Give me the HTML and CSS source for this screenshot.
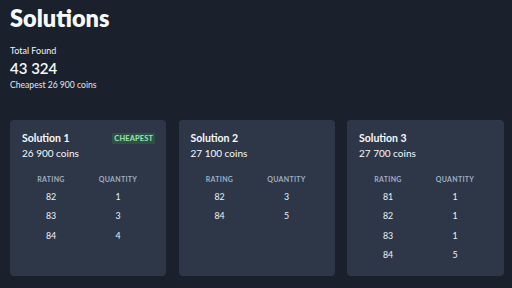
FILE: index.html
```html
<!DOCTYPE html>
<html>
<head>
<meta charset="utf-8">
<link rel="stylesheet" href="styles.css">
</head>
<body>
<div class="page">
  <h1 class="title">Solutions</h1>
  <div class="summary">
    <div class="label">Total Found</div>
    <div class="total">43 324</div>
    <div class="cheapest">Cheapest 26 900 coins</div>
  </div>
  <div class="cards">
    <div class="card">
      <div class="card-head">
        <div class="name">Solution 1</div>
        <span class="badge">CHEAPEST</span>
      </div>
      <div class="price">26 900 coins</div>
      <div class="table">
        <div class="th">RATING</div><div class="th">QUANTITY</div>
        <div class="td">82</div><div class="td">1</div>
        <div class="td">83</div><div class="td">3</div>
        <div class="td">84</div><div class="td">4</div>
      </div>
    </div>
    <div class="card">
      <div class="card-head">
        <div class="name">Solution 2</div>
      </div>
      <div class="price">27 100 coins</div>
      <div class="table">
        <div class="th">RATING</div><div class="th">QUANTITY</div>
        <div class="td">82</div><div class="td">3</div>
        <div class="td">84</div><div class="td">5</div>
      </div>
    </div>
    <div class="card">
      <div class="card-head">
        <div class="name">Solution 3</div>
      </div>
      <div class="price">27 700 coins</div>
      <div class="table">
        <div class="th">RATING</div><div class="th">QUANTITY</div>
        <div class="td">81</div><div class="td">1</div>
        <div class="td">82</div><div class="td">1</div>
        <div class="td">83</div><div class="td">1</div>
        <div class="td">84</div><div class="td">5</div>
      </div>
    </div>
  </div>
</div>
</body>
</html>
```
FILE: styles.css
```css
* { box-sizing: border-box; }
html, body { margin: 0; padding: 0; }
body {
  background: #1a202c;
  color: #f7fafc;
  font-family: "Lato", "Noto Sans", sans-serif;
  width: 512px;
  height: 288px;
  overflow: hidden;
}
.page {
  padding: 3px 0 0 10px;
}
.title {
  margin: 0;
  font-size: 23.5px;
  font-weight: 800;
  line-height: 30px;
  color: #f7fafc;
}
.summary {
  margin-top: 12px;
}
.label {
  font-size: 9px;
  line-height: 12px;
  color: #edf2f7;
}
.total {
  font-size: 15px;
  font-weight: 600;
  line-height: 18px;
  margin-top: 2px;
}
.cheapest {
  font-size: 8.6px;
  line-height: 12px;
  color: #e2e8f0;
  margin-top: 2px;
}
.cards {
  margin-top: 29px;
  width: 494px;
  display: grid;
  grid-template-columns: 156px 156px 157px;
  column-gap: 12.5px;
}
.card {
  background: #2d3748;
  border-radius: 4px;
  height: 156px;
  padding: 11px 11px 12px 12px;
}
.card-head {
  display: flex;
  justify-content: space-between;
  align-items: center;
  height: 14px;
}
.name {
  font-size: 10.5px;
  font-weight: 700;
  color: #f7fafc;
}
.badge {
  background: #2f5046;
  color: #9ae6b4;
  font-size: 7.5px;
  font-weight: 700;
  line-height: 9px;
  padding: 1px 2px;
  border-radius: 1px;
  letter-spacing: 0.1px;
}
.price {
  font-size: 10px;
  line-height: 14px;
  margin-top: 1px;
  color: #f7fafc;
}
.table {
  display: grid;
  grid-template-columns: 58px 76px;
  grid-template-rows: 12px;
  grid-auto-rows: 19.5px;
  margin-top: 14.5px;
}
.th {
  text-align: center;
  font-size: 7px;
  font-weight: 700;
  color: #a0aec0;
  letter-spacing: 0.3px;
  line-height: 9px;
}
.td {
  text-align: center;
  font-size: 8.8px;
  color: #edf2f7;
  line-height: 19.5px;
}
```
